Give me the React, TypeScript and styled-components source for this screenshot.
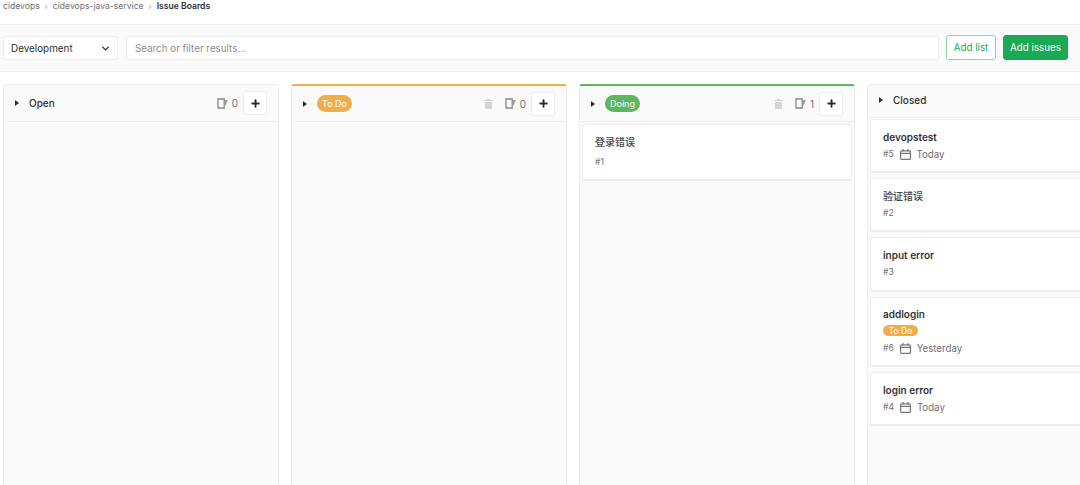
import React from "react";
import styled, { createGlobalStyle } from "styled-components";
import { ChevronDown, Plus } from "lucide-react";

const GlobalStyle = createGlobalStyle`
  html, body {
    margin: 0;
    height: 485px;
    overflow: hidden;
    background: #fff;
    font-family: Inter, "Noto Sans CJK SC", sans-serif;
    color: #2e2e2e;
  }
  * { box-sizing: border-box; }
`;

const Page = styled.div`
  width: 1080px;
  height: 485px;
  overflow: hidden;
  display: flex;
  flex-direction: column;
`;

const Breadcrumbs = styled.nav`
  height: 25px;
  flex: none;
  padding: 0 0 12px 3px;
  display: flex;
  align-items: center;
  gap: 5px;
  font-size: 8.6px;
  color: #707070;
  border-bottom: 1px solid #efefef;
`;

const Crumb = styled.span<{ $current?: boolean }>`
  color: ${(p) => (p.$current ? "#2e2e2e" : "#707070")};
  font-weight: ${(p) => (p.$current ? 600 : 400)};
`;

const Sep = styled.span`
  color: #9a9a9a;
  font-size: 8px;
`;

const FilterBar = styled.div`
  height: 47px;
  flex: none;
  padding: 10px 12px 0 3px;
  display: flex;
  align-items: flex-start;
  background: #fafafa;
  border-bottom: 1px solid #efefef;
`;

const Select = styled.div`
  flex: none;
  width: 115px;
  height: 24px;
  margin-top: 1px;
  padding: 0 6px 0 7px;
  display: flex;
  align-items: center;
  justify-content: space-between;
  font-size: 9.9px;
  color: #2e2e2e;
  background: #fff;
  border: 1px solid #eee;
  border-radius: 3px;
`;

const Search = styled.div`
  flex: none;
  width: 813px;
  height: 24px;
  margin: 1px 0 0 8px;
  padding: 0 8px;
  display: flex;
  align-items: center;
  font-size: 9.8px;
  color: #8c8c8c;
  background: #fff;
  border: 1px solid #eee;
  border-radius: 3px;
`;

const Button = styled.div<{ $primary?: boolean }>`
  flex: none;
  width: ${(p) => (p.$primary ? "65px" : "50px")};
  height: 25px;
  margin-left: 7px;
  display: flex;
  align-items: center;
  justify-content: center;
  white-space: nowrap;
  font-size: 9.8px;
  border-radius: 3px;
  border: 1px solid ${(p) => (p.$primary ? "#1aaa55" : "#8fd4ab")};
  color: ${(p) => (p.$primary ? "#fff" : "#1aaa55")};
  background: ${(p) => (p.$primary ? "#1aaa55" : "#fff")};
`;

const Board = styled.div`
  flex: 1;
  padding: 12px 0 0 3px;
  display: flex;
  gap: 12px;
  min-height: 0;
`;

const Column = styled.section<{ $accent?: string; $wide?: boolean }>`
  width: ${(p) => (p.$wide ? "240px" : "276px")};
  flex: none;
  height: 420px;
  background: #fafafa;
  border: 1px solid #eee;
  border-top: ${(p) => (p.$accent ? `2px solid ${p.$accent}` : "1px solid #eee")};
  border-radius: 3px 3px 0 0;
`;

const ColumnHeader = styled.header<{ $accent?: boolean; $short?: boolean }>`
  height: ${(p) => (p.$short ? "33px" : p.$accent ? "36px" : "37px")};
  padding: 0 11px ${(p) => (p.$short ? "2px" : "0")};
  display: flex;
  align-items: center;
  border-bottom: 1px solid #eee;
`;

const Caret = styled.span`
  width: 0;
  height: 0;
  margin-right: 10px;
  border-top: 3px solid transparent;
  border-bottom: 3px solid transparent;
  border-left: 4px solid #2e2e2e;
`;

const ListTitle = styled.span`
  font-size: 10px;
  font-weight: 500;
  color: #2e2e2e;
`;

const Pill = styled.span<{ $color: string; $small?: boolean }>`
  display: inline-flex;
  align-items: center;
  justify-content: center;
  flex: none;
  width: 35px;
  height: ${(p) => (p.$small ? "11px" : "17px")};
  margin-top: ${(p) => (p.$small ? "4px" : "0")};
  border-radius: 9px;
  font-size: ${(p) => (p.$small ? "8.5px" : "9px")};
  color: #fff;
  background: ${(p) => p.$color};
`;

const Actions = styled.div`
  margin-left: auto;
  display: flex;
  align-items: center;
`;

const Count = styled.span`
  display: flex;
  align-items: center;
  gap: 4px;
  margin-left: 12px;
  font-size: 10px;
  color: #707070;
`;

const AddButton = styled.div`
  width: 24px;
  height: 24px;
  margin-left: 5px;
  display: flex;
  align-items: center;
  justify-content: center;
  color: #2e2e2e;
  background: #fff;
  border: 1px solid #eee;
  border-radius: 3px;
`;

const Cards = styled.div<{ $tight?: boolean }>`
  padding: ${(p) => (p.$tight ? "1px" : "2px")} 2px 0;
  display: flex;
  flex-direction: column;
  gap: 6px;
`;

const Card = styled.article<{ $height: number; $labelled?: boolean }>`
  height: ${(p) => p.$height}px;
  padding: ${(p) => (p.$labelled ? "9px" : "10px")} 12px 0;
  background: #fff;
  border: 1px solid #eee;
  border-radius: 3px;
  box-shadow: 0 1px 1px rgba(0, 0, 0, 0.06);
  display: flex;
  flex-direction: column;
`;

const CardTitle = styled.div<{ $cjk?: boolean }>`
  font-size: 10px;
  line-height: 14px;
  font-weight: ${(p) => (p.$cjk ? 500 : 600)};
  color: ${(p) => (p.$cjk ? "#444" : "#333")};
`;

const CardMeta = styled.div<{ $gap?: number }>`
  margin-top: ${(p) => p.$gap ?? 3}px;
  display: flex;
  align-items: center;
  gap: 6px;
  height: 14px;
`;

const Ref = styled.span`
  font-size: 8.5px;
  color: #707070;
`;

const Due = styled.span`
  font-size: 9.7px;
  color: #707070;
`;

const IssuesIcon = () => (
  <svg width="11" height="11" viewBox="0 0 11 11" fill="none" stroke="#8a8a8a" strokeWidth="1.3">
    <path d="M1 1h6.2v9H1z" />
    <path d="M7.2 2.8h2.6L7.8 7" />
  </svg>
);

const TrashIcon = () => (
  <svg width="9" height="10" viewBox="0 0 9 10" fill="#d4d4d4">
    <path d="M3 0h3v1h3v1H0V1h3zM1 3h7v6.2a.8.8 0 0 1-.8.8H1.8a.8.8 0 0 1-.8-.8z" />
  </svg>
);

const CalendarIcon = () => (
  <svg width="11" height="11" viewBox="0 0 11 11" fill="none" stroke="#777" strokeWidth="1.2">
    <rect x="0.6" y="1.8" width="9.8" height="8.6" rx="1" />
    <path d="M0.6 4.4h9.8M3 0v2.6M8 0v2.6" />
  </svg>
);

const ListActions = ({ count, trash }: { count: number; trash?: boolean }) => (
  <Actions>
    {trash && <TrashIcon />}
    <Count>
      <IssuesIcon />
      {count}
    </Count>
    <AddButton>
      <Plus size={11} strokeWidth={4.2} />
    </AddButton>
  </Actions>
);

const App = () => (
  <Page>
    <GlobalStyle />
    <Breadcrumbs>
      <Crumb>cidevops</Crumb>
      <Sep>›</Sep>
      <Crumb>cidevops-java-service</Crumb>
      <Sep>›</Sep>
      <Crumb $current>Issue Boards</Crumb>
    </Breadcrumbs>
    <FilterBar>
      <Select>
        Development
        <ChevronDown size={11} strokeWidth={3} />
      </Select>
      <Search>Search or filter results...</Search>
      <Button>Add list</Button>
      <Button $primary>Add issues</Button>
    </FilterBar>
    <Board>
      <Column>
        <ColumnHeader>
          <Caret />
          <ListTitle>Open</ListTitle>
          <ListActions count={0} />
        </ColumnHeader>
      </Column>
      <Column $accent="#f0ad4e">
        <ColumnHeader $accent>
          <Caret />
          <Pill $color="#f0ad4e">To Do</Pill>
          <ListActions count={0} trash />
        </ColumnHeader>
      </Column>
      <Column $accent="#5cb85c">
        <ColumnHeader $accent>
          <Caret />
          <Pill $color="#5cb85c">Doing</Pill>
          <ListActions count={1} trash />
        </ColumnHeader>
        <Cards>
          <Card $height={56}>
            <CardTitle $cjk>登录错误</CardTitle>
            <CardMeta $gap={6}>
              <Ref>#1</Ref>
            </CardMeta>
          </Card>
        </Cards>
      </Column>
      <Column $wide>
        <ColumnHeader $short>
          <Caret />
          <ListTitle>Closed</ListTitle>
        </ColumnHeader>
        <Cards $tight>
          <Card $height={53}>
            <CardTitle>devopstest</CardTitle>
            <CardMeta>
              <Ref>#5</Ref>
              <CalendarIcon />
              <Due>Today</Due>
            </CardMeta>
          </Card>
          <Card $height={53}>
            <CardTitle $cjk>验证错误</CardTitle>
            <CardMeta>
              <Ref>#2</Ref>
            </CardMeta>
          </Card>
          <Card $height={54}>
            <CardTitle>input error</CardTitle>
            <CardMeta>
              <Ref>#3</Ref>
            </CardMeta>
          </Card>
          <Card $height={69} $labelled>
            <CardTitle>addlogin</CardTitle>
            <Pill $color="#f0ad4e" $small>To Do</Pill>
            <CardMeta $gap={5}>
              <Ref>#6</Ref>
              <CalendarIcon />
              <Due>Yesterday</Due>
            </CardMeta>
          </Card>
          <Card $height={53}>
            <CardTitle>login error</CardTitle>
            <CardMeta>
              <Ref>#4</Ref>
              <CalendarIcon />
              <Due>Today</Due>
            </CardMeta>
          </Card>
        </Cards>
      </Column>
    </Board>
  </Page>
);

export default App;
